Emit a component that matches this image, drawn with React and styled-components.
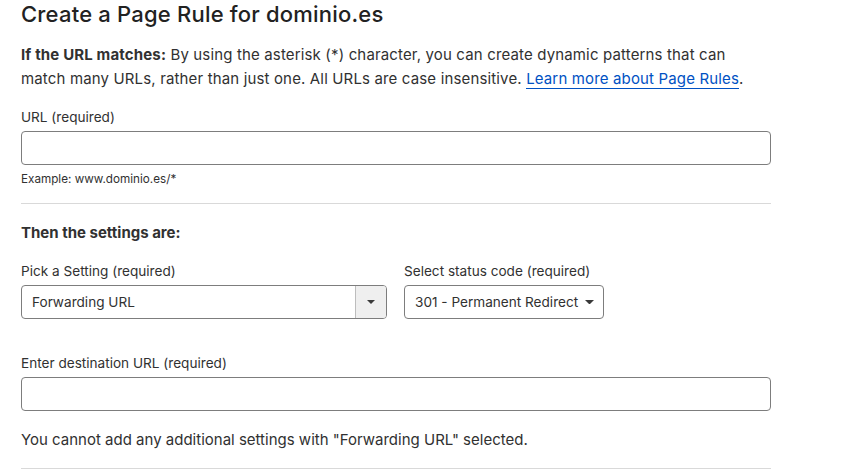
import React from 'react';
import styled, { createGlobalStyle } from 'styled-components';

const GlobalStyle = createGlobalStyle`
  body {
    margin: 0;
    background: #fff;
    font-family: Inter, "Noto Sans", sans-serif;
    color: #313131;
  }
`;

const Page = styled.div`
  padding: 0 91px 0 21px;
  width: 750px;
`;

const Title = styled.h1`
  font-size: 22px;
  font-weight: 500;
  letter-spacing: 0.2px;
  margin: 0;
  line-height: 28px;
  color: #222;
`;

const Intro = styled.p`
  font-size: 15px;
  line-height: 24px;
  letter-spacing: 0.15px;
  margin: 15px 0 0;
  max-width: 735px;
`;

const Link = styled.a`
  color: #0051c3;
  text-decoration: none;
  border-bottom: 1px solid #0051c3;
`;

const Field = styled.div`
  display: flex;
  flex-direction: column;
  margin-top: ${(p) => p.$top || 0}px;
  width: ${(p) => p.$width || 'auto'};
`;

const Label = styled.label`
  font-size: 13.6px;
  line-height: 16px;
  margin-bottom: 6px;
`;

const TextInput = styled.input`
  box-sizing: border-box;
  height: 34px;
  width: 100%;
  border: 1px solid #7d7d7d;
  border-radius: 4px;
  font: inherit;
  font-size: 13px;
  padding: 0 10px;
  outline: none;
`;

const Hint = styled.div`
  font-size: 11.7px;
  line-height: 16px;
  margin-top: 6px;
`;

const Divider = styled.hr`
  border: 0;
  border-top: 1px solid #d9d9d9;
  margin: ${(p) => p.$margin};
`;

const Subhead = styled.h2`
  font-size: 15px;
  font-weight: 700;
  line-height: 20px;
  margin: 0;
`;

const Row = styled.div`
  display: flex;
  gap: 17px;
  margin-top: 20px;
`;

const SelectBox = styled.div`
  box-sizing: border-box;
  height: 34px;
  border: 1px solid #7d7d7d;
  border-radius: 4px;
  display: flex;
  align-items: center;
  font-size: 13.6px;
  overflow: hidden;
`;

const SelectValue = styled.span`
  flex: 1;
  padding-left: 10px;
  white-space: nowrap;
`;

const ArrowCell = styled.span`
  width: 30px;
  align-self: stretch;
  border-left: 1px solid #bdbdbd;
  background: #efefef;
  display: flex;
  align-items: center;
  justify-content: center;
`;

const InlineArrow = styled.span`
  display: flex;
  padding-right: 9px;
`;

const Caret = ({ w = 8 }) => (
  <svg width={w} height={w / 2} viewBox="0 0 8 4">
    <path d="M0 0h8L4 4z" fill="#3a3a3a" />
  </svg>
);

const Note = styled.p`
  font-size: 15px;
  line-height: 20px;
  margin: 19px 0 0;
`;

export default function App() {
  return (
    <Page>
      <GlobalStyle />
      <Title>Create a Page Rule for dominio.es</Title>
      <Intro>
        <strong>If the URL matches:</strong> By using the asterisk (*) character, you can create dynamic patterns that can
        match many URLs, rather than just one. All URLs are case insensitive.{' '}
        <Link href="#">Learn more about Page Rules</Link>.
      </Intro>

      <Field $top={18}>
        <Label>URL (required)</Label>
        <TextInput />
        <Hint>Example: www.dominio.es/*</Hint>
      </Field>

      <Divider $margin="16px 0 19px" />

      <Subhead>Then the settings are:</Subhead>

      <Row>
        <Field $width="366px">
          <Label>Pick a Setting (required)</Label>
          <SelectBox>
            <SelectValue>Forwarding URL</SelectValue>
            <ArrowCell><Caret w={8} /></ArrowCell>
          </SelectBox>
        </Field>
        <Field $width="200px">
          <Label>Select status code (required)</Label>
          <SelectBox>
            <SelectValue>301 - Permanent Redirect</SelectValue>
            <InlineArrow><Caret w={9} /></InlineArrow>
          </SelectBox>
        </Field>
      </Row>

      <Field $top={36}>
        <Label>Enter destination URL (required)</Label>
        <TextInput />
      </Field>

      <Note>You cannot add any additional settings with "Forwarding URL" selected.</Note>

      <Divider $margin="18px 0 0" />
    </Page>
  );
}
